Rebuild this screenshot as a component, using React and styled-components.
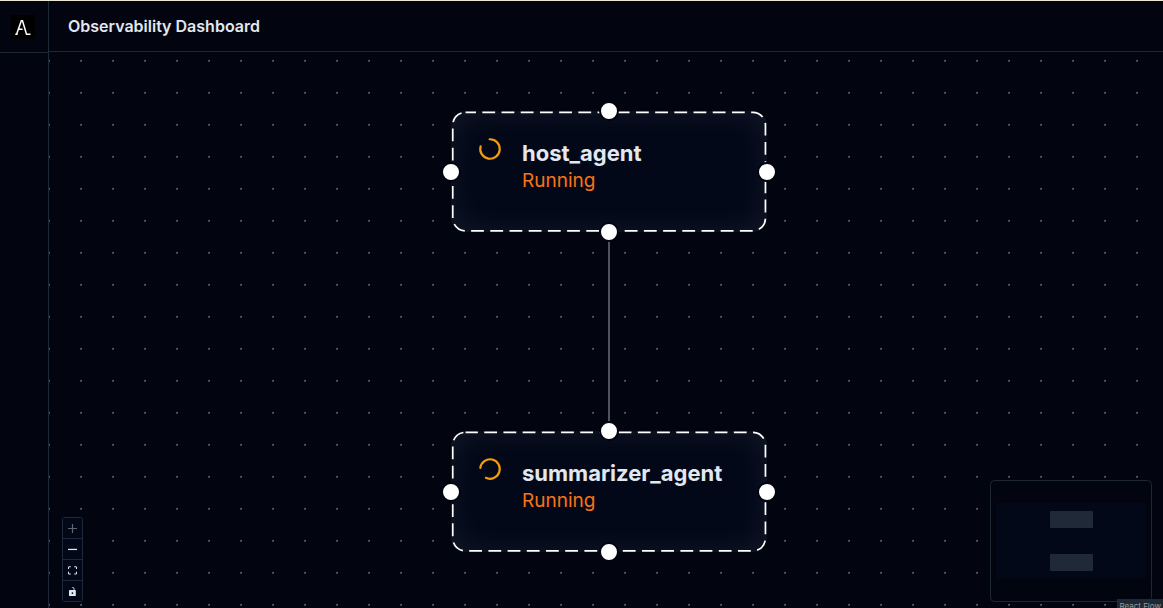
import React from "react";
import styled, { createGlobalStyle } from "styled-components";

const GlobalStyle = createGlobalStyle`
  * { box-sizing: border-box; }
  body { margin: 0; background: #020510; color: #e2e8f0; font-family: Inter, "Liberation Sans", sans-serif; }
`;

const Shell = styled.div`
  display: flex;
  height: 100vh;
  overflow: hidden;
  border-top: 1px solid #ece8d0;
`;

const Sidebar = styled.nav`
  flex: none;
  width: 49px;
  border-right: 1px solid #1e2937;
`;

const Brand = styled.a`
  display: flex;
  align-items: center;
  height: 52px;
  padding-left: 11px;
  border-bottom: 1px solid #1e2937;
`;

const Logo = styled.svg`
  display: block;
  width: 24px;
  height: 24px;
  background: #000;
`;

const Main = styled.main`
  flex: 1;
  min-width: 0;
  display: flex;
  flex-direction: column;
`;

const Header = styled.header`
  flex: none;
  display: flex;
  align-items: center;
  height: 51px;
  padding: 0 19px;
  border-bottom: 1px solid #1e2937;
`;

const Title = styled.h1`
  margin: 0;
  font-size: 16px;
  line-height: 24px;
  font-weight: 600;
`;

const Canvas = styled.section`
  position: relative;
  flex: 1;
  min-height: 0;
  overflow: hidden;
`;

const Dots = styled.svg`
  position: absolute;
  inset: 0;
  width: 100%;
  height: 100%;
`;

const Node = styled.article`
  position: absolute;
  left: 402px;
  top: ${(p) => p.$top}px;
  width: 316px;
  height: 121px;
  display: flex;
  gap: 19px;
  padding: 25px 26px;
  border-radius: 14px;
  background: #030818;
  box-shadow: inset 0 0 32px rgba(255, 255, 255, 0.08);
`;

const Outline = styled.svg`
  position: absolute;
  inset: 0;
  width: 100%;
  height: 100%;
`;

const Spinner = styled.svg`
  flex: none;
  width: 26px;
  height: 26px;
  color: #f59e0b;
`;

const NodeText = styled.div`
  padding-top: 3px;
`;

const NodeName = styled.h2`
  margin: 0;
  font-size: 22px;
  line-height: 28px;
  font-weight: 700;
`;

const NodeStatus = styled.p`
  margin: 0;
  font-size: 19px;
  line-height: 28px;
  color: #f97316;
`;

const places = {
  top: "left: 50%; top: 0;",
  right: "left: 100%; top: 50%;",
  bottom: "left: 50%; top: 100%;",
  left: "left: 0; top: 50%;",
};

const Handle = styled.span`
  position: absolute;
  ${(p) => places[p.$side]}
  width: 20px;
  height: 20px;
  margin: -10px;
  border: 2px solid #020510;
  border-radius: 50%;
  background: #fff;
`;

const Controls = styled.div`
  position: absolute;
  left: 13px;
  bottom: 6px;
  display: flex;
  flex-direction: column;
  gap: 1px;
  padding: 1px;
  border-radius: 3px;
  background: #1f2937;
`;

const ControlButton = styled.button`
  display: flex;
  align-items: center;
  justify-content: center;
  width: 19px;
  height: 20px;
  padding: 0;
  border: 0;
  background: #030818;
  color: #e2e8f0;

  &:disabled { color: #62656e; }
`;

const ControlIcon = styled.svg`
  width: 9px;
  height: 9px;
  fill: currentColor;
`;

const MiniMap = styled.svg`
  position: absolute;
  right: 11px;
  bottom: 6px;
  width: 162px;
  height: 122px;
`;

const Attribution = styled.a`
  position: absolute;
  right: 0;
  bottom: -5px;
  padding: 2px;
  background: #1e2937;
  color: #999;
  font-size: 8px;
  line-height: 10px;
  text-decoration: none;
`;

const agents = [
  { name: "host_agent", status: "Running", top: 59, dash: 2.4, spin: -92 },
  { name: "summarizer_agent", status: "Running", top: 379, dash: 0.5, spin: 187 },
];

function AgentNode({ agent }) {
  return (
    <Node $top={agent.top}>
      <Outline aria-hidden="true">
        <rect x="1.75" y="1.3" width="312.7" height="118.6" rx="12.8" fill="none" stroke="#fff"
          strokeWidth="1.7" strokeDasharray="12.8 6.4" strokeDashoffset={agent.dash} />
      </Outline>
      <Spinner viewBox="0 0 24 24" fill="none" stroke="currentColor" strokeWidth="2" strokeLinecap="round" aria-hidden="true">
        <path d="M21 12a9 9 0 1 1-6.219-8.56" transform={`rotate(${agent.spin} 12 12)`} />
      </Spinner>
      <NodeText>
        <NodeName>{agent.name}</NodeName>
        <NodeStatus>{agent.status}</NodeStatus>
      </NodeText>
      {Object.keys(places).map((side) => <Handle key={side} $side={side} />)}
    </Node>
  );
}

export default function App() {
  return (
    <>
      <GlobalStyle />
      <Shell>
        <Sidebar>
          <Brand href="#" aria-label="Home">
            <Logo viewBox="0 0 24 24" fill="none" stroke="#fff" strokeWidth="1.5">
              <path d="M4.3 19.3h2.4M5.6 19.3 10.3 5.7h1.2l4 13.6h4M7.6 14.2h4" />
            </Logo>
          </Brand>
        </Sidebar>
        <Main>
          <Header><Title>Observability Dashboard</Title></Header>
          <Canvas>
            <Dots aria-hidden="true">
              <defs>
                <pattern id="dots" width="32" height="32" patternUnits="userSpaceOnUse">
                  <circle cx="0.1" cy="8.8" r="0.9" fill="#7a7e86" />
                  <circle cx="32.1" cy="8.8" r="0.9" fill="#7a7e86" />
                </pattern>
              </defs>
              <rect width="100%" height="100%" fill="url(#dots)" />
              <path d="M560 180V380" stroke="#64686f" strokeWidth="1.6" />
            </Dots>
            {agents.map((agent) => <AgentNode key={agent.name} agent={agent} />)}
            <Controls>
              <ControlButton disabled aria-label="Zoom in">
                <ControlIcon viewBox="0 0 32 32"><path d="M32 18.133H18.133V32h-4.266V18.133H0v-4.266h13.867V0h4.266v13.867H32z" /></ControlIcon>
              </ControlButton>
              <ControlButton aria-label="Zoom out">
                <ControlIcon viewBox="0 0 32 32"><path d="M0 13.5h32v4.5H0z" /></ControlIcon>
              </ControlButton>
              <ControlButton aria-label="Fit view">
                <ControlIcon viewBox="0 0 32 30"><path d="M3.692 4.63c0-.53.4-.938.939-.938h5.215V0H4.708C2.13 0 0 2.054 0 4.63v5.216h3.692V4.631zM27.354 0h-5.2v3.692h5.17c.53 0 .984.4.984.939v5.215H32V4.631A4.624 4.624 0 0027.354 0zm.954 24.83c0 .532-.4.94-.939.94h-5.215v3.768h5.215c2.577 0 4.631-2.13 4.631-4.707v-5.139h-3.692v5.139zm-23.677.94c-.531 0-.939-.4-.939-.94v-5.138H0v5.139c0 2.577 2.13 4.707 4.708 4.707h5.138V25.77H4.631z" /></ControlIcon>
              </ControlButton>
              <ControlButton aria-label="Toggle interactivity">
                <ControlIcon viewBox="0 0 25 32"><path d="M21.333 10.667H19.81V7.619C19.81 3.429 16.38 0 12.19 0c-4.114 1.828-1.37 2.133.305 2.438 1.676.305 4.42 2.59 4.42 5.181v3.048H3.047A3.056 3.056 0 000 13.714v15.238A3.056 3.056 0 003.048 32h18.285a3.056 3.056 0 003.048-3.048V13.714a3.056 3.056 0 00-3.048-3.047zM12.19 24.533a3.056 3.056 0 01-3.047-3.047 3.056 3.056 0 013.047-3.048 3.056 3.056 0 013.048 3.048 3.056 3.056 0 01-3.048 3.047z" /></ControlIcon>
              </ControlButton>
            </Controls>
            <MiniMap viewBox="0 0 162 122" role="img" aria-label="Mini map">
              <rect x="0.5" y="0.5" width="161" height="121" rx="4" fill="#020510" stroke="#1f2733" />
              <path d="M6 23h150v75H6z" fill="#030818" />
              <rect x="60" y="31" width="43" height="17" rx="1" fill="#1f2937" />
              <rect x="60" y="74" width="43" height="17" rx="1" fill="#1f2937" />
            </MiniMap>
            <Attribution href="#">React Flow</Attribution>
          </Canvas>
        </Main>
      </Shell>
    </>
  );
}
